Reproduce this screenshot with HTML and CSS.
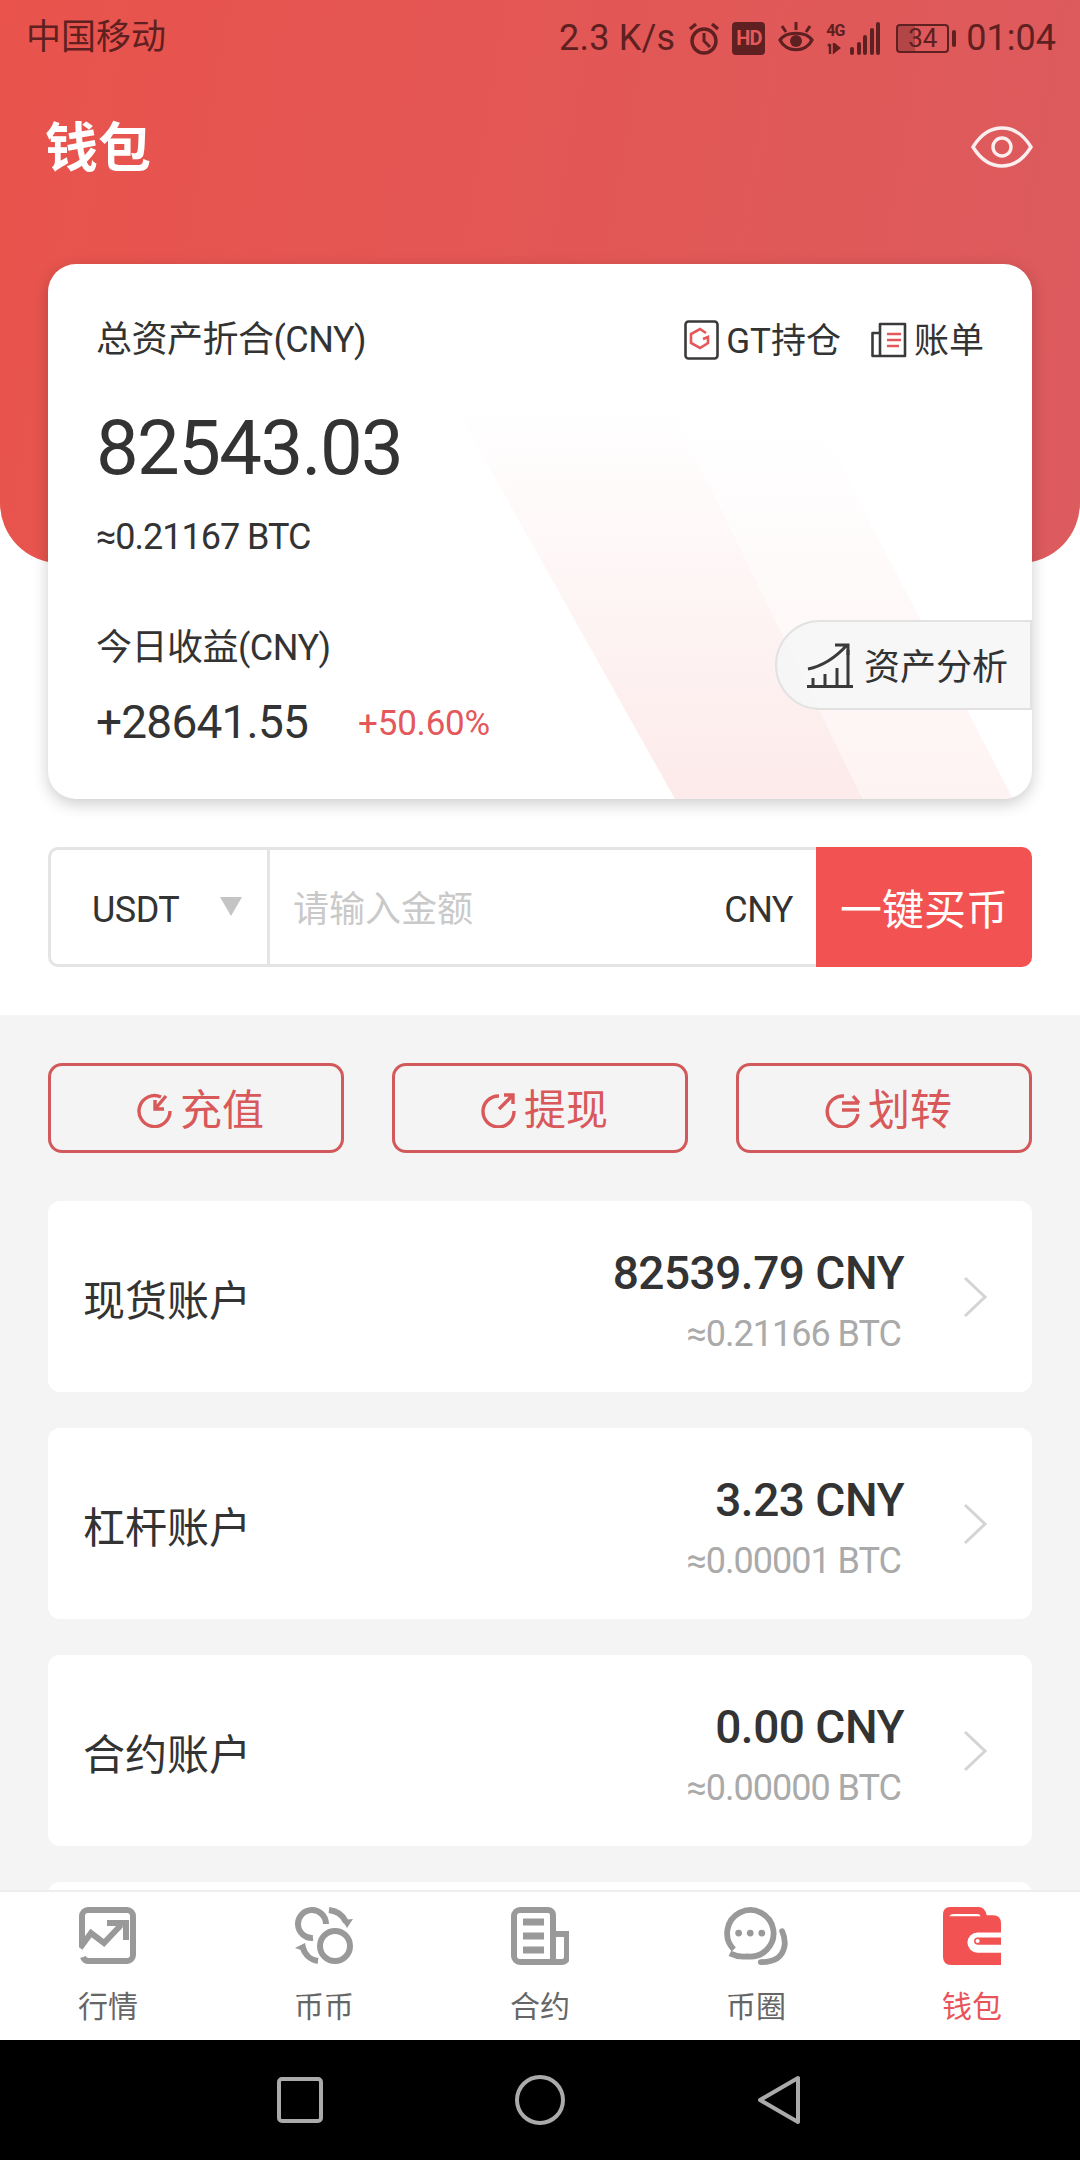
FILE: index.html
```html
<!DOCTYPE html>
<html lang="zh-CN">
<head>
<meta charset="utf-8">
<title>钱包</title>
<link rel="stylesheet" href="styles.css">
</head>
<body>
<div class="app">
  <main class="content">
    <section class="hero">
      <div class="status">
        <span class="carrier">中国移动</span>
        <div class="status-right">
          <span class="speed">2.3 K/s</span>
          <svg class="st-alarm" viewBox="0 0 32 34" width="32" height="34"><circle cx="16" cy="20" r="12" fill="none" stroke="#5e2020" stroke-width="3.4"/><path d="M16 12v8l6 6" fill="none" stroke="#5e2020" stroke-width="3"/><path d="M2 8l6-5M30 8l-6-5" stroke="#5e2020" stroke-width="3.400" fill="none"/></svg>
          <span class="hd">HD</span>
          <svg class="st-eye" viewBox="0 0 36 34" width="36" height="34"><path d="M2 19C8 10 28 10 34 19 28 32 8 32 2 19Z" fill="none" stroke="#5e2020" stroke-width="3.2"/><circle cx="18" cy="20" r="6" fill="#5e2020"/><path d="M18 9V1M8 11L4 5M28 11l4-6" stroke="#5e2020" stroke-width="3"/></svg>
          <div class="net">
            <div class="net-labels"><span class="net-4g">4G</span><svg viewBox="0 0 20 12" width="20" height="12"><path d="M4 1v10M2 3l2-2M8 1v8l5-4z" stroke="#5e2020" stroke-width="2.400" fill="#5e2020"/></svg></div>
            <div class="bars"><i class="b1"></i><i class="b2"></i><i class="b3"></i><i class="b4"></i><i class="b5"></i></div>
          </div>
          <div class="battery"><span class="bat-fill"></span><span class="bat-num">34</span></div><i class="bat-nib"></i>
          <span class="clock">01:04</span>
        </div>
      </div>
      <div class="titlebar">
        <h1 class="title">钱包</h1>
        <svg class="eye" viewBox="0 0 62 42" width="62" height="42"><path d="M2 21C10 8 20 2 31 2s21 6 29 19C52 34 42 40 31 40S10 34 2 21Z" fill="none" stroke="#fbeeee" stroke-width="3.4"/><circle cx="31" cy="21" r="9" fill="none" stroke="#fbeeee" stroke-width="3.4"/></svg>
      </div>
    </section>

    <section class="card">
      <svg class="card-deco" viewBox="0 0 984 535" width="984" height="535">
        <defs>
          <linearGradient id="dg" gradientUnits="userSpaceOnUse" x1="0" y1="140" x2="0" y2="535"><stop offset="0" stop-color="#fdeaea" stop-opacity="0"/><stop offset="1" stop-color="#fdeaea"/></linearGradient>
          <linearGradient id="dh" gradientUnits="userSpaceOnUse" x1="0" y1="160" x2="0" y2="535"><stop offset="0" stop-color="#fef3f3" stop-opacity="0"/><stop offset="1" stop-color="#fef3f3"/></linearGradient>
        </defs>
        <path d="M400 130L597 90 815 535H627Z" fill="url(#dg)"/>
        <path d="M597 90L720 60 965 535H815Z" fill="url(#dh)"/>
      </svg>
      <div class="card-top">
        <span class="label">总资产折合(CNY)</span>
        <div class="links">
          <span class="link">
            <svg viewBox="0 0 35 40" width="35" height="40"><rect x="1.500" y="1.500" width="32" height="37" rx="3" fill="none" stroke="#3a3a3a" stroke-width="2.600"/><path d="M22 13l-6-4-9 5v9l9 5 8-5v-6l-5 2" fill="none" stroke="#e4575b" stroke-width="2.600"/></svg>
            <span class="tx">GT持仓</span>
          </span>
          <span class="link">
            <svg viewBox="0 0 36 36" width="36" height="36"><path d="M9 11H1.500v23H34V2H9v32" fill="none" stroke="#3a3a3a" stroke-width="2.600" stroke-linejoin="round"/><path d="M16 12h14M16 18h14M16 24h12" stroke="#e4575b" stroke-width="2.400"/></svg>
            <span class="tx">账单</span>
          </span>
        </div>
      </div>
      <div class="total">82543.03</div>
      <div class="approx">≈0.21167 BTC</div>
      <div class="label today">今日收益(CNY)</div>
      <div class="gain-row"><span class="gain">+28641.55</span><span class="pct">+50.60%</span></div>
      <div class="analysis">
        <svg viewBox="0 0 46 46" width="46" height="46"><path d="M0 44.500h46M6 44V36M18 44V32M30 44V26M41 44V8" stroke="#3a3a3a" stroke-width="3" fill="none"/><path d="M1 27C16 24 30 14 40 3M28 3h13v10" stroke="#3a3a3a" stroke-width="3" fill="none"/></svg>
        <span class="tx-low">资产分析</span>
      </div>
    </section>

    <section class="buy">
      <div class="buy-select"><span class="lat">USDT</span><i class="tri"></i></div>
      <div class="buy-input"><span class="ph">请输入金额</span><span class="lat">CNY</span></div>
      <div class="buy-btn">一键买币</div>
    </section>

    <section class="accounts">
      <div class="actions">
        <div class="action">
          <svg viewBox="0 0 36 36" width="36" height="36"><path d="M24 5A15.500 15.500 0 1 0 33 19" fill="none" stroke="#d9585a" stroke-width="3.400"/><path d="M29 4L18 17M18 8v9h9" fill="none" stroke="#d9585a" stroke-width="3.400"/></svg>
          <span>充值</span>
        </div>
        <div class="action">
          <svg viewBox="0 0 36 36" width="36" height="36"><path d="M18 4A15.500 15.500 0 1 0 33 19" fill="none" stroke="#d9585a" stroke-width="3.400"/><path d="M18 17L32 3M23 3h9v9" fill="none" stroke="#d9585a" stroke-width="3.400"/></svg>
          <span>提现</span>
        </div>
        <div class="action">
          <svg viewBox="0 0 36 36" width="36" height="36"><path d="M19 4A15.500 15.500 0 1 0 33 22" fill="none" stroke="#d9585a" stroke-width="3.400"/><path d="M17 11h17M28 4l6 7M34 18H17" fill="none" stroke="#d9585a" stroke-width="3.400"/></svg>
          <span>划转</span>
        </div>
      </div>
      <div class="acct">
        <span class="acct-name">现货账户</span>
        <div class="acct-vals"><span class="amt">82539.79 CNY</span><span class="btc">≈0.21166 BTC</span></div>
        <svg class="chev" viewBox="0 0 26 42" width="26" height="42"><path d="M3 2l20 19L3 40" fill="none" stroke="#d4d4d4" stroke-width="3"/></svg>
      </div>
      <div class="acct">
        <span class="acct-name">杠杆账户</span>
        <div class="acct-vals"><span class="amt">3.23 CNY</span><span class="btc">≈0.00001 BTC</span></div>
        <svg class="chev" viewBox="0 0 26 42" width="26" height="42"><path d="M3 2l20 19L3 40" fill="none" stroke="#d4d4d4" stroke-width="3"/></svg>
      </div>
      <div class="acct">
        <span class="acct-name">合约账户</span>
        <div class="acct-vals"><span class="amt">0.00 CNY</span><span class="btc">≈0.00000 BTC</span></div>
        <svg class="chev" viewBox="0 0 26 42" width="26" height="42"><path d="M3 2l20 19L3 40" fill="none" stroke="#d4d4d4" stroke-width="3"/></svg>
      </div>
      <div class="acct"></div>
    </section>
  </main>

  <nav class="tabs">
    <div class="tab">
      <svg viewBox="0 0 58 58" width="58" height="58"><path d="M3 37V9a6 6 0 0 1 6-6h39a6 6 0 0 1 6 6v39a6 6 0 0 1-6 6H9a6 6 0 0 1-5-4" fill="none" stroke="#999" stroke-width="6"/><path d="M1 41l11-15 13 10 17-18" fill="none" stroke="#999" stroke-width="6"/><path d="M28 16h19v17" fill="none" stroke="#999" stroke-width="6"/></svg>
      <span>行情</span>
    </div>
    <div class="tab">
      <svg viewBox="0 0 60 58" width="60" height="58"><path d="M32 17A14 14 0 1 0 19 31" fill="none" stroke="#999" stroke-width="6"/><path d="M35 3C43 4 49 8 52 15" fill="none" stroke="#999" stroke-width="6"/><path d="M48 13l11-1-6 9z" fill="#999"/><circle cx="41" cy="39" r="15" fill="none" stroke="#999" stroke-width="6"/><path d="M24 54C17 53 11 48 9 41" fill="none" stroke="#999" stroke-width="6"/><path d="M1 41l10-5 2 9z" fill="#999"/></svg>
      <span>币币</span>
    </div>
    <div class="tab">
      <svg viewBox="0 0 58 58" width="58" height="58"><path d="M42 30V8a5 5 0 0 0-5-5H9a6 6 0 0 0-6 6v40a6 6 0 0 0 6 6h42a5 5 0 0 0 5-5V27H42v28" fill="none" stroke="#999" stroke-width="6"/><path d="M12 15h21M12 29h21M12 43h21" stroke="#999" stroke-width="7"/></svg>
      <span>合约</span>
    </div>
    <div class="tab">
      <svg viewBox="0 0 67 60" width="65" height="58"><path d="M10 44A24 24 0 1 1 24 51C17 52 10 50 6 48" fill="none" stroke="#999" stroke-width="6"/><path d="M60 25C65 36 63 47 55 53 50 56 44 57 38 57" fill="none" stroke="#999" stroke-width="6" stroke-linecap="round"/><circle cx="15" cy="27" r="3.500" fill="#999"/><circle cx="27" cy="27" r="3.500" fill="#999"/><circle cx="39" cy="27" r="3.500" fill="#999"/></svg>
      <span>币圈</span>
    </div>
    <div class="tab tab-on">
      <svg viewBox="0 0 57 57" width="58" height="58"><path d="M7 0H35Q41 0 43 8H49Q57 8 57 16V57H8Q0 57 0 49V8Q0 0 7 0Z" fill="#f25252"/><path d="M57 25H34a10 10 0 0 0 0 20H57Z" fill="#fff"/><path d="M57 30H34a3.500 3.500 0 0 0 0 7H57Z" fill="#f25252"/><circle cx="34" cy="33.500" r="2" fill="#fff"/><path d="M6 9Q8 7 10 7H34Q36 7 37 9Z" fill="#fff"/></svg>
      <span>钱包</span>
    </div>
  </nav>

  <footer class="sysnav">
    <svg viewBox="0 0 46 46" width="46" height="46"><rect x="2" y="2" width="42" height="42" rx="3" fill="none" stroke="#aaa" stroke-width="4"/></svg>
    <svg viewBox="0 0 50 50" width="50" height="50"><circle cx="25" cy="25" r="23" fill="none" stroke="#aaa" stroke-width="4"/></svg>
    <svg viewBox="0 0 44 50" width="44" height="50"><path d="M41 3v44L3 25Z" fill="none" stroke="#aaa" stroke-width="4" stroke-linejoin="round"/></svg>
  </footer>
</div>
</body>
</html>
```

FILE: styles.css
```css
* { box-sizing: border-box; }
html, body { margin: 0; padding: 0; }
body {
  width: 1080px;
  height: 2160px;
  overflow: hidden;
  background: #fff;
  color: #333;
  font-family: "Roboto", "Noto Sans CJK SC", sans-serif;
}
.app { width: 1080px; height: 2160px; display: flex; flex-direction: column; }
.content { flex: 1; min-height: 0; overflow: hidden; display: flex; flex-direction: column; }

.hero {
  height: 563px;
  flex: none;
  background: linear-gradient(100deg, #e9534c, #dc5b5e);
  border-radius: 0 0 60px 60px;
}
.status {
  height: 74px;
  padding: 2px 24px 0 26px;
  display: flex;
  align-items: center;
  justify-content: space-between;
  color: #5e2020;
}
.carrier { font-size: 35px; line-height: 40px; }
.status-right { display: flex; align-items: center; }
.speed { font-size: 36px; line-height: 40px; margin-right: 13px; letter-spacing: .2px; }
.hd {
  width: 33px; height: 33px; margin: 0 13px 0 12px;
  background: #5e2020; color: #e45a5a;
  border-radius: 4px;
  font-size: 20px; font-weight: 700; line-height: 33px; text-align: center;
  letter-spacing: -1px;
}
.st-eye { margin-right: 12px; }
.net { display: flex; align-items: flex-end; gap: 4px; height: 34px; }
.net-labels { display: flex; flex-direction: column; width: 20px; gap: 4px; }
.net-4g { font-size: 16px; line-height: 16px; font-weight: 700; letter-spacing: -1px; }
.bars { display: flex; align-items: flex-end; gap: 2.5px; }
.bars i { display: block; width: 4px; background: #5e2020; border-radius: 2px; }
.bars .b1 { height: 8px; }
.bars .b2 { height: 13px; }
.bars .b3 { height: 20px; }
.bars .b4 { height: 27px; }
.bars .b5 { height: 33px; }
.battery {
  position: relative;
  width: 53px; height: 29px; margin-left: 16px;
  border: 2px solid #5e2020; border-radius: 4px;
  display: flex; align-items: center; justify-content: center;
}
.bat-fill { position: absolute; left: 0; top: 0; bottom: 0; width: 34%; background: rgba(94,32,32,.35); }
.bat-num { position: relative; font-size: 26px; line-height: 26px; }
.bat-nib { display: block; width: 4px; height: 17px; margin: 0 10px 0 3px; background: #5e2020; border-radius: 2px; }
.clock { font-size: 36px; line-height: 40px; }

.titlebar {
  height: 146px;
  padding: 0 47px 0 45px;
  display: flex;
  align-items: center;
  justify-content: space-between;
}
.title { margin: 0; padding-top: 3px; font-size: 53px; line-height: 60px; font-weight: 700; color: #fff; }

.card {
  position: relative;
  flex: none;
  height: 535px;
  margin: -299px 48px 0;
  padding: 56px 48px 0;
  background: #fff;
  border-radius: 28px;
  box-shadow: 0 5px 16px rgba(0,0,0,.2);
  overflow: hidden;
}
.card-deco { position: absolute; left: 0; top: 0; }
.card-top { position: relative; display: flex; justify-content: space-between; align-items: center; height: 40px; }
.label { position: relative; display: block; font-size: 36px; line-height: 40px; color: #333; letter-spacing: -.5px; }
.links { display: flex; gap: 30px; }
.link { display: flex; align-items: center; gap: 7px; font-size: 35px; line-height: 40px; }
.tx { padding-top: 3px; }
.tx-low { padding-top: 5px; }
.total { position: relative; margin-top: 48px; font-size: 76px; line-height: 80px; letter-spacing: -1.6px; color: #333; }
.approx { position: relative; margin-top: 29px; font-size: 36px; line-height: 40px; letter-spacing: -1px; color: #333; }
.today { margin-top: 71px; }
.gain-row { position: relative; margin-top: 26px; display: flex; align-items: center; height: 56px; gap: 50px; }
.gain { font-size: 46px; line-height: 56px; letter-spacing: -.8px; color: #333; }
.pct { font-size: 35px; line-height: 40px; letter-spacing: -.2px; padding-top: 4px; color: #e4575b; }
.analysis {
  position: absolute;
  right: 0; top: 356px;
  width: 257px; height: 90px;
  padding-left: 30px;
  display: flex; align-items: center; gap: 11px;
  background: rgba(246,246,246,.92);
  border: 2px solid #e2e2e2;
  border-radius: 45px 0 0 45px;
  font-size: 36px; line-height: 44px; color: #333;
}

.buy {
  flex: none;
  height: 120px;
  margin: 48px;
  display: flex;
}
.buy-select {
  width: 222px;
  padding: 0 25px 0 41px;
  display: flex; align-items: center; justify-content: space-between;
  border: 3px solid #e4e4e4; border-radius: 10px 0 0 10px;
}
.lat { font-size: 36px; line-height: 40px; letter-spacing: -.5px; color: #333; padding-top: 6px; }
.tri { width: 0; height: 0; border-style: solid; border-width: 19px 11px 0; border-color: #c4c4c4 transparent transparent; margin-top: -2px; }
.buy-input {
  flex: 1;
  padding: 0 23px 0 23px;
  display: flex; align-items: center; justify-content: space-between;
  border: 3px solid #e4e4e4; border-width: 3px 0 3px 0;
}
.ph { font-size: 36px; line-height: 44px; padding-top: 6px; color: #c9c9c9; }
.buy-btn {
  width: 216px;
  background: #f25252;
  border-radius: 0 10px 10px 0;
  color: #fff;
  font-size: 42px; line-height: 127px; text-align: center;
}

.accounts {
  flex: 1;
  min-height: 0;
  overflow: hidden;
  padding: 48px 48px 0;
  background: #f4f4f4;
  display: flex;
  flex-direction: column;
  gap: 36px;
}
.actions { flex: none; display: flex; gap: 48px; margin-bottom: 12px; }
.action {
  flex: 1;
  height: 90px;
  padding: 3px 0 0 9px;
  display: flex; align-items: center; justify-content: center; gap: 7px;
  border: 3px solid #d2595b;
  border-radius: 14px;
  color: #d9585a;
  font-size: 42px; line-height: 48px;
}
.action span { padding-top: 3px; }
.acct {
  flex: none;
  height: 191px;
  padding: 0 44px 0 37px;
  display: flex; align-items: center;
  background: #fff;
  border-radius: 12px;
}
.acct-name { padding-top: 10px; margin-left: -2px; font-size: 42px; line-height: 50px; color: #333; }
.acct-vals { margin-left: auto; margin-right: 58px; display: flex; flex-direction: column; align-items: flex-end; gap: 15px; padding-top: 7px; }
.amt { font-size: 46px; line-height: 52px; font-weight: 500; color: #333; letter-spacing: -.5px; }
.btc { font-size: 36px; line-height: 40px; letter-spacing: -1px; color: #aaa; margin-right: 3px; }

.tabs {
  flex: none;
  height: 150px;
  background: #fff;
  border-top: 2px solid #eee;
  display: grid;
  grid-template-columns: repeat(5, 216px);
  padding-top: 15px;
}
.tab { display: flex; flex-direction: column; align-items: center; font-size: 30px; line-height: 36px; color: #666; }
.tab svg { display: block; flex: none; }
.tab span { position: relative; top: 24px; }
.tab-on { color: #e9545a; }

.sysnav {
  flex: none;
  height: 120px;
  padding: 0 279px 0 277px;
  background: #000;
  display: flex; align-items: center; justify-content: space-between;
}
```
